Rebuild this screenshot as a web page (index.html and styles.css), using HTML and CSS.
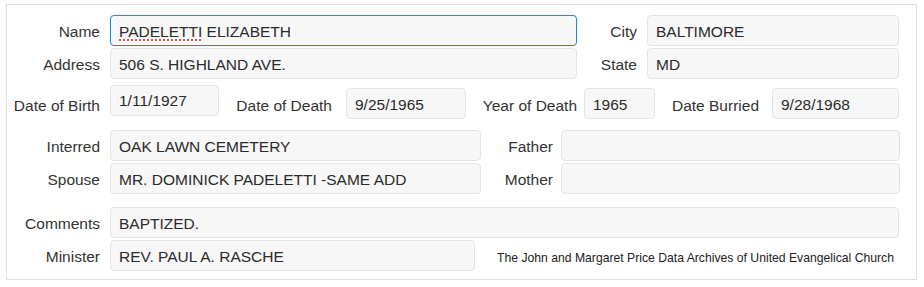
FILE: index.html
```html
<!DOCTYPE html>
<html lang="en">
<head>
    <meta charset="UTF-8">
    <title>Burial Record</title>
    <link rel="stylesheet" href="styles.css">
</head>
<body>
    <div class="panel">
        <div class="row">
            <label class="lbl">Name</label>
            <div class="box focused w-name"><span class="misspelled">PADELETTI</span> ELIZABETH</div>
            <label class="lbl lbl-city">City</label>
            <div class="box w-city">BALTIMORE</div>
        </div>
        <div class="row">
            <label class="lbl">Address</label>
            <div class="box w-name">506 S. HIGHLAND AVE.</div>
            <label class="lbl lbl-city">State</label>
            <div class="box w-city">MD</div>
        </div>

        <div class="row row-dates">
            <label class="lbl">Date of Birth</label>
            <div class="box raised w-dob">1/11/1927</div>
            <label class="lbl lbl-dod">Date of Death</label>
            <div class="box w-dod">9/25/1965</div>
            <label class="lbl lbl-yod">Year of Death</label>
            <div class="box w-yod">1965</div>
            <label class="lbl lbl-buried">Date Burried</label>
            <div class="box w-buried">9/28/1968</div>
        </div>

        <div class="row row-family">
            <label class="lbl">Interred</label>
            <div class="box w-half">OAK LAWN CEMETERY</div>
            <label class="lbl lbl-parent">Father</label>
            <div class="box w-parent"></div>
        </div>
        <div class="row">
            <label class="lbl">Spouse</label>
            <div class="box w-half">MR. DOMINICK PADELETTI -SAME ADD</div>
            <label class="lbl lbl-parent">Mother</label>
            <div class="box w-parent"></div>
        </div>

        <div class="row row-notes">
            <label class="lbl">Comments</label>
            <div class="box w-full">BAPTIZED.</div>
        </div>
        <div class="row">
            <label class="lbl">Minister</label>
            <div class="box w-minister">REV. PAUL A. RASCHE</div>
            <div class="credit">The John and Margaret Price Data Archives of United Evangelical Church</div>
        </div>
    </div>
</body>
</html>
```

FILE: styles.css
```css
body {
    margin: 0;
    font-family: "Liberation Sans", Arial, sans-serif;
    font-size: 15.5px;
    color: #333;
    background: #fff;
}

.panel {
    box-sizing: border-box;
    width: 911px;
    height: 276px;
    margin: 4px 0 0 6px;
    padding-top: 10px;
    border: 1px solid #dedede;
}

.row {
    display: flex;
    align-items: center;
    height: 31px;
    margin-top: 2px;
}

.row:first-child {
    margin-top: 0;
}

.row-dates {
    margin-top: 9px;
    align-items: flex-start;
}

.row-dates .lbl {
    line-height: 31px;
    padding-top: 2px;
}

.row-family {
    margin-top: 11px;
}

.row-notes {
    margin-top: 13px;
}

/* labels sit right-aligned against their box */
.lbl {
    flex: none;
    box-sizing: border-box;
    width: 103px;
    padding-right: 10px;
    padding-top: 2px;
    text-align: right;
    white-space: nowrap;
}

.lbl-city { width: 70px; }
.lbl-dod { width: 127px; padding-right: 14px; }
.lbl-yod { width: 118px; padding-right: 7px; }
.lbl-buried { width: 117px; padding-right: 13px; }
.lbl-parent { width: 80px; padding-right: 8px; }

.box {
    flex: none;
    box-sizing: border-box;
    height: 31px;
    line-height: 30px;
    padding: 1px 8px 0;
    background: #f7f7f7;
    border: 1px solid #e4e4e4;
    border-radius: 4px;
    color: #2b2b2b;
    white-space: nowrap;
    overflow: hidden;
}

.box.focused {
    border-color: #1f8dd6;
    box-shadow: 0 0 2px rgba(31, 141, 214, 0.25);
}

.box.raised {
    margin-top: -3px;
    line-height: 27px;
}

.misspelled {
    text-decoration: underline dotted #d22;
    text-underline-offset: 3px;
}

.w-name { width: 467px; }
.w-city { width: 252px; }
.w-dob { width: 109px; }
.w-dod { width: 120px; }
.w-yod { width: 71px; }
.w-buried { width: 127px; }
.w-half { width: 371px; }
.w-parent { width: 339px; }
.w-full { width: 789px; }
.w-minister { width: 365px; }

.credit {
    margin-left: 22px;
    margin-top: 5px;
    font-size: 12.2px;
    color: #222;
    white-space: nowrap;
}
```
